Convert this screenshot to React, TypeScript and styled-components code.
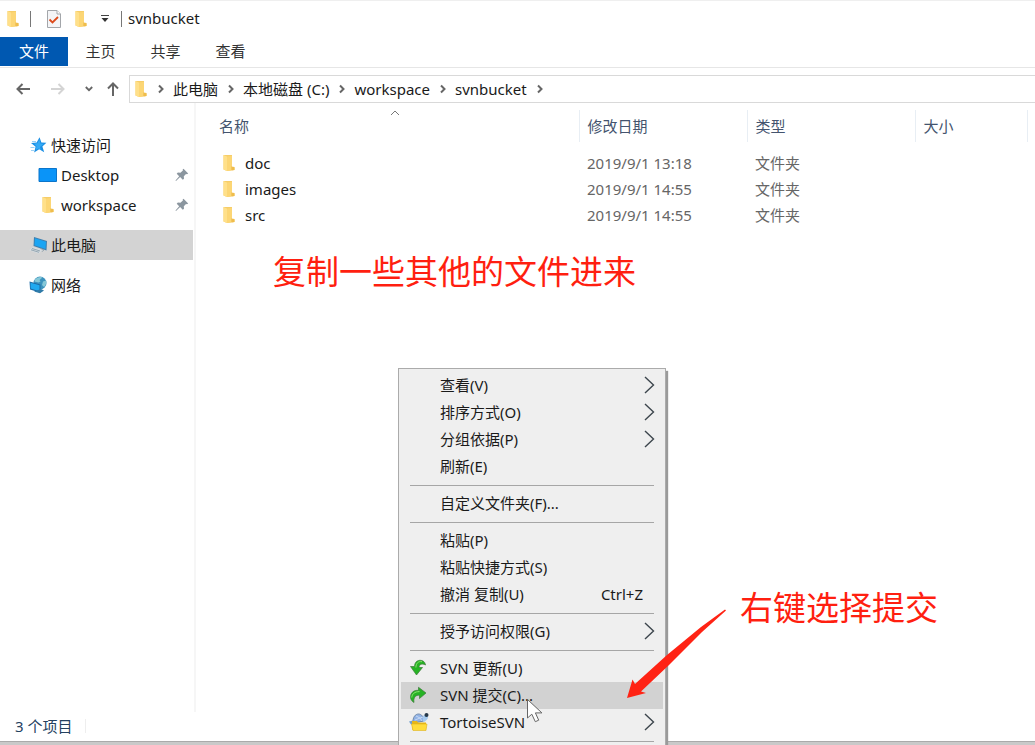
import React from "react";
import styled, { createGlobalStyle } from "styled-components";

const GlobalStyle = createGlobalStyle`
  * { box-sizing: border-box; }
  body {
    margin: 0;
    background: #fff;
    color: #1a1a1a;
    font: 15px/20px "Noto Sans", "Noto Sans CJK SC", sans-serif;
  }
  button, input { font: inherit; color: inherit; }
  ul, ol { list-style: none; margin: 0; padding: 0; }
`;

const Window = styled.div`
  position: relative;
  display: flex;
  flex-direction: column;
  height: 100vh;
  overflow: hidden;
  border-top: 1px solid #efefef;
`;

const TitleBar = styled.header`
  display: flex;
  align-items: center;
  height: 36px;
  padding: 0 6px 1px;
`;

const IconButton = styled.button<{ $w: number }>`
  display: flex;
  align-items: center;
  justify-content: center;
  flex: none;
  width: ${(p) => p.$w}px;
  height: 24px;
  padding: 0;
  border: 0;
  background: none;
`;

const Divider = styled.span<{ $before: number; $after: number }>`
  width: 1px;
  height: 16px;
  margin: 0 ${(p) => p.$after}px 0 ${(p) => p.$before}px;
  background: #777;
`;

const Title = styled.h1`
  margin: 0;
  padding-bottom: 2px;
  font-size: 15px;
  font-weight: 400;
  line-height: 20px;
`;

const Ribbon = styled.nav`
  display: flex;
  height: 31px;
  border-bottom: 1px solid #e6e6e6;
`;

const Tab = styled.button<{ $primary?: boolean }>`
  height: 29px;
  padding: 0 17px 1px;
  border: 0;
  background: ${(p) => (p.$primary ? "#0058b1" : "transparent")};
  color: ${(p) => (p.$primary ? "#fff" : "#333")};
  min-width: ${(p) => (p.$primary ? 68 : 65)}px;
`;

const NavBar = styled.div`
  display: flex;
  align-items: center;
  height: 35px;
  padding: 7px 0 0 9px;
`;

const Address = styled.ol`
  display: flex;
  flex: 1;
  align-items: center;
  height: 28px;
  padding: 0 0 1px 4px;
  border: 1px solid #d9d9d9;
  border-right: 0;
`;

const Crumb = styled.li`
  display: flex;
  align-items: center;
`;

const CrumbLink = styled.a`
  color: #1a1a1a;
  text-decoration: none;
`;

const CrumbArrow = styled.svg`
  width: 8px;
  height: 10px;
  margin: 0 8px 0 9px;
`;

const Body = styled.div`
  display: flex;
  flex: 1;
  min-height: 0;
`;

const Sidebar = styled.nav`
  flex: none;
  width: 196px;
  padding: 27px 1px 0 0;
  border-right: 2px solid #f6f6f6;
`;

const SideGroup = styled.ul`
  margin-bottom: 10px;
`;

const SideItem = styled.li<{ $nested?: boolean; $selected?: boolean }>`
  display: flex;
  align-items: center;
  gap: 4px;
  height: 30px;
  padding: 0 4px 1px ${(p) => (p.$nested ? 38 : 29)}px;
  background: ${(p) => (p.$selected ? "#d3d3d3" : "transparent")};
`;

const SideLink = styled.a`
  flex: 1;
  color: #1a1a1a;
  text-decoration: none;
`;

const SideIcon = styled.svg<{ $w: number }>`
  flex: none;
  width: ${(p) => p.$w}px;
  height: 18px;
`;

const FolderSlot = styled.span`
  display: flex;
  justify-content: center;
  width: 19px;
`;

const Files = styled.main`
  flex: 1;
  min-width: 0;
  padding: 7px 0 0 15px;
`;

const FileTable = styled.table`
  table-layout: fixed;
  width: 816px;
  border-collapse: collapse;
`;

const HeadCell = styled.th<{ $w: number }>`
  position: relative;
  width: ${(p) => p.$w}px;
  height: 32px;
  padding: 0 8px;
  border-right: 1px solid #e8eef4;
  color: #44546e;
  font-weight: 400;
  text-align: left;
`;

const SortMark = styled.svg`
  position: absolute;
  top: 0;
  left: 50%;
  width: 10px;
  height: 6px;
  margin-left: -5px;
`;

const Spacer = styled.tr`
  height: 8px;
`;

const Cell = styled.td`
  height: 26px;
  padding: 0 8px 1px;
  color: #666;
`;

const FileName = styled.span`
  display: flex;
  align-items: center;
  gap: 9px;
  padding-left: 3px;
  color: #1a1a1a;
`;

const StatusBar = styled.footer`
  display: flex;
  align-items: center;
  height: 33px;
  padding: 0 15px 2px;
  border-bottom: 3px solid #c9c9c9;
  box-shadow: inset 0 -1px 0 #aaa;
  color: #24415f;
`;

const StatusDivider = styled.span`
  width: 1px;
  height: 14px;
  margin-left: 13px;
  background: #eee;
`;

const Menu = styled.ul`
  position: absolute;
  top: 367px;
  bottom: 0;
  left: 398px;
  width: 268px;
  padding: 3px 2px;
  border: 1px solid #ababab;
  border-bottom: 0;
  background: #efefef;
  box-shadow: 2px 3px 1px #9a9a9a;
`;

const MenuButton = styled.button<{ $active?: boolean }>`
  display: flex;
  align-items: center;
  width: 100%;
  height: 27px;
  padding: 0 8px 1px;
  border: 0;
  background: ${(p) => (p.$active ? "#d2d2d2" : "transparent")};
  text-align: left;
`;

const MenuIcon = styled.span`
  display: flex;
  align-items: center;
  width: 31px;
  height: 20px;
`;

const MenuLabel = styled.span`
  flex: 1;
`;

const Shortcut = styled.kbd`
  padding-right: 12px;
  font: inherit;
`;

const Separator = styled.li`
  height: 1px;
  margin: 5px 9px 4px;
  background: #a6a6a6;
`;

const Note = styled.p<{ $x: number; $y: number }>`
  position: absolute;
  left: ${(p) => p.$x}px;
  top: ${(p) => p.$y}px;
  margin: 0;
  color: #ff1f10;
  font: 33px/40px "Noto Sans CJK SC", sans-serif;
  white-space: nowrap;
`;

const Overlay = styled.svg<{ $x: number; $y: number }>`
  position: absolute;
  left: ${(p) => p.$x}px;
  top: ${(p) => p.$y}px;
  pointer-events: none;
`;

const Folder = () => (
  <svg width="14" height="18" viewBox="0 0 14 18" aria-hidden="true">
    <path d="M1.5 1H10v12l2.500 .5V16l-7.500 1-3.500-1.500z" fill="#f6cd68" />
    <path d="M1.500 1 5 2.500V17l-3.500-1.500z" fill="#ffe08a" />
    <path d="M5 2.500 10 1.800V12l-1 1v3.500L5 17z" fill="#fcd675" />
    <path d="M9.500 12.500l3 .6V16l-3 .4z" fill="#efbd4d" />
  </svg>
);

const CheckedPage = () => (
  <svg width="16" height="18" viewBox="0 0 16 18" aria-hidden="true">
    <path d="M1.5 .5H11l3.500 3.500v13.500h-13z" fill="#f4f5f7" stroke="#a3a6aa" />
    <path d="M11 .5V4h3.500" fill="#fff" stroke="#a3a6aa" />
    <path d="m3.500 9.500 3 3 5.500-5.500" fill="none" stroke="#dc4b1c" strokeWidth="1.800" />
  </svg>
);

const Chevron = () => (
  <CrumbArrow viewBox="0 0 8 10" aria-hidden="true">
    <path d="m2 1.500 3.500 3.500L2 8.500" fill="none" stroke="#666" strokeWidth="2" />
  </CrumbArrow>
);

const Submenu = () => (
  <svg width="11" height="18" viewBox="0 0 11 18" aria-hidden="true">
    <path d="m1 1 8.500 8L1 17" fill="none" stroke="#3d464d" strokeWidth="1.400" />
  </svg>
);

const Pin = () => (
  <svg width="14" height="14" viewBox="0 0 14 14" aria-hidden="true">
    <path
      d="M8.500 .8 13.200 5.500 12 6.200l-1-.2-2.200 2.300 .2 2.400-1.200 1.100-2.700-2.700L1 13l-.5-.5 3.700-4.200-2.500-2.600 1.200-1.200 2.500 .2 2.500-2.200-.2-1z"
      fill="#8b969f"
    />
  </svg>
);

const Star = () => (
  <SideIcon $w={18} viewBox="0 0 18 18" aria-hidden="true">
    <path d="m10.500 1.200 1.900 5.300 5 .2-4 3.700 1.800 5.900-5-3.100-5.100 3.300 1.500-5.800L2 7l5.700-.5z" fill="#1b8fe4" />
    <path d="m10.300 3.200 1.200 4.200 3.500 .3-4 3.200 1 3-2.500-1.500-3 1.500 1-3.500L5 7.600l3.500-.3z" fill="#34aaf5" />
    <path d="M3 5.500h4M1.500 11.500h4M2 14.500h3" stroke="#9ad2f6" />
  </SideIcon>
);

const Screen = () => (
  <SideIcon $w={19} viewBox="0 0 19 18" aria-hidden="true">
    <path d="M1 2.500h17.500v13H1z" fill="#0a94f8" stroke="#0b75ca" />
  </SideIcon>
);

const Computer = () => (
  <SideIcon $w={18} viewBox="0 0 18 18" aria-hidden="true">
    <path d="m5 1 13 4-.5 9.500L4.500 10z" fill="#3f7fae" />
    <path d="m6 2.300 11 3.500-.5 7.200-11-3.700z" fill="#1ba5f3" />
    <path d="m4 11 9 3-3 3.500-10-3.200z" fill="#d6dde2" />
    <path d="m3 12.500 8 2.500M2 13.800l8 2.500M11.500 12.500l3.500 1.300-2 2" fill="none" stroke="#8498a5" strokeWidth=".8" />
  </SideIcon>
);

const Network = () => (
  <SideIcon $w={18} viewBox="0 0 18 18" aria-hidden="true">
    <circle cx="11" cy="7" r="6.500" fill="#3c92bd" />
    <path d="M6 3.500C8 1 12 .3 13.500 1.500L10.500 4l1 1.500-2 1-4-1zM14 5.500l3-1c.8 2-.2 5-2 6.500L13 9z" fill="#86c8d8" />
    <path d="m.5 5.500 11 3v8.300L1 13.500z" fill="#1d6ca7" />
    <path d="m1.500 6.700 9 2.600v5.900l-8.800-2.600z" fill="#20a9f0" />
    <path d="m5 15.500 6 1.800 4-2.800-3-1.500z" fill="#317ba8" />
  </SideIcon>
);

const UpdateIcon = () => (
  <svg width="18" height="18" viewBox="0 0 18 18" aria-hidden="true">
    <path d="M16.500 6C16 2 12.500 .8 9.500 1.500 6.800 2.200 5.500 4.500 5.500 7.500H1.500L7.500 16l6-7.500H10C10 5.500 13 4 16.500 6z" fill="#26b324" stroke="#3f7a3c" strokeWidth=".7" />
    <path d="M13 2.700C9 2 7 4.500 6.900 8.500" fill="none" stroke="#8be36f" />
  </svg>
);

const CommitIcon = () => (
  <svg width="18" height="18" viewBox="0 0 18 18" aria-hidden="true">
    <path d="M5 16.500C1.500 14.500 .8 11 2.200 8 3.500 5.200 6 4.200 9.500 4.300V1.300L17 7l-6.500 5.500V9.200C6.500 9 4.200 11.500 5 16.500z" fill="#26b324" stroke="#3f7a3c" strokeWidth=".7" />
    <path d="M2.800 11.500C3 8 5.500 5.600 10.500 5.600" fill="none" stroke="#8be36f" />
  </svg>
);

const TortoiseIcon = () => (
  <svg width="20" height="20" viewBox="0 0 20 20" aria-hidden="true">
    <path d="M4 11C3.500 5 6.500 2 9.500 2S15 5 15 9z" fill="#91b3e6" stroke="#7189a8" />
    <path d="m7 4 4 2 3-1M6 8l5-2 2 3" fill="none" stroke="#c6d8f3" />
    <path d="M14 5.500c0-4 5-4 5 0 0 2-2 3-5 5z" fill="#a5caef" />
    <circle cx="17.500" cy="3" r="2" fill="#263849" />
    <path d="m0 9.500 4-1 1 3-3 1z" fill="#729fce" />
    <path d="M3 9h5l1 1.500h8V18H3.500z" fill="#e7b719" />
    <path d="M2.500 12H18l-1 6.500H4z" fill="#ffdc3b" stroke="#dfb41c" strokeWidth=".6" />
  </svg>
);

const crumbs = ["此电脑", "本地磁盘 (C:)", "workspace", "svnbucket"];

const files = [
  { name: "doc", date: "2019/9/1 13:18" },
  { name: "images", date: "2019/9/1 14:55" },
  { name: "src", date: "2019/9/1 14:55" },
];

type Entry = {
  label: string;
  sub?: boolean;
  keys?: string;
  icon?: React.ReactNode;
  active?: boolean;
};

const menuGroups: Entry[][] = [
  [
    { label: "查看(V)", sub: true },
    { label: "排序方式(O)", sub: true },
    { label: "分组依据(P)", sub: true },
    { label: "刷新(E)" },
  ],
  [{ label: "自定义文件夹(F)..." }],
  [{ label: "粘贴(P)" }, { label: "粘贴快捷方式(S)" }, { label: "撤消 复制(U)", keys: "Ctrl+Z" }],
  [{ label: "授予访问权限(G)", sub: true }],
  [
    { label: "SVN 更新(U)", icon: <UpdateIcon /> },
    { label: "SVN 提交(C)...", icon: <CommitIcon />, active: true },
    { label: "TortoiseSVN", icon: <TortoiseIcon />, sub: true },
  ],
];

export default function App() {
  return (
    <Window>
      <GlobalStyle />
      <TitleBar>
        <IconButton $w={14} aria-label="窗口"><Folder /></IconButton>
        <Divider $before={10} $after={15} />
        <IconButton $w={16} aria-label="属性"><CheckedPage /></IconButton>
        <IconButton $w={38} aria-label="新建文件夹"><Folder /></IconButton>
        <IconButton $w={10} aria-label="自定义快速访问工具栏">
          <svg width="8" height="8" viewBox="0 0 8 8" aria-hidden="true">
            <path d="M0 .5h8" stroke="#444" />
            <path d="M.5 3h7L4 7z" fill="#333" />
          </svg>
        </IconButton>
        <Divider $before={11} $after={6} />
        <Title>svnbucket</Title>
      </TitleBar>

      <Ribbon>
        <Tab $primary>文件</Tab>
        <Tab>主页</Tab>
        <Tab>共享</Tab>
        <Tab>查看</Tab>
      </Ribbon>

      <NavBar>
        <IconButton $w={27} aria-label="后退">
          <svg width="14" height="12" viewBox="0 0 14 12"><path d="M14 6H2M6.500 1 1.500 6l5 5" fill="none" stroke="#666" strokeWidth="2" /></svg>
        </IconButton>
        <IconButton $w={44} aria-label="前进">
          <svg width="14" height="12" viewBox="0 0 14 12"><path d="M0 6h12M7.500 1l5 5-5 5" fill="none" stroke="#d4d4d4" strokeWidth="2" /></svg>
        </IconButton>
        <IconButton $w={17} aria-label="最近浏览的位置">
          <svg width="8" height="6" viewBox="0 0 8 6"><path d="m.8 1 3.200 3.200L7.200 1" fill="none" stroke="#666" strokeWidth="1.800" /></svg>
        </IconButton>
        <IconButton $w={32} aria-label="上移">
          <svg width="12" height="14" viewBox="0 0 12 14"><path d="M6 14V2M1 6.500l5-5 5 5" fill="none" stroke="#666" strokeWidth="2" /></svg>
        </IconButton>
        <Address>
          <Crumb><Folder /><Chevron /></Crumb>
          {crumbs.map((c) => (
            <Crumb key={c}><CrumbLink href="#">{c}</CrumbLink><Chevron /></Crumb>
          ))}
        </Address>
      </NavBar>

      <Body>
        <Sidebar>
          <SideGroup>
            <SideItem><Star /><SideLink href="#">快速访问</SideLink></SideItem>
            <SideItem $nested><Screen /><SideLink href="#">Desktop</SideLink><Pin /></SideItem>
            <SideItem $nested>
              <FolderSlot><Folder /></FolderSlot><SideLink href="#">workspace</SideLink><Pin />
            </SideItem>
          </SideGroup>
          <SideGroup>
            <SideItem $selected><Computer /><SideLink href="#">此电脑</SideLink></SideItem>
          </SideGroup>
          <SideGroup>
            <SideItem><Network /><SideLink href="#">网络</SideLink></SideItem>
          </SideGroup>
        </Sidebar>

        <Files>
          <FileTable>
            <thead>
              <tr>
                <HeadCell $w={368}>
                  名称
                  <SortMark viewBox="0 0 10 6" aria-hidden="true"><path d="m1 5 4-4 4 4" fill="none" stroke="#777" /></SortMark>
                </HeadCell>
                <HeadCell $w={168}>修改日期</HeadCell>
                <HeadCell $w={168}>类型</HeadCell>
                <HeadCell $w={112}>大小</HeadCell>
              </tr>
            </thead>
            <tbody>
              <Spacer />
              {files.map((f) => (
                <tr key={f.name}>
                  <Cell><FileName><Folder />{f.name}</FileName></Cell>
                  <Cell>{f.date}</Cell>
                  <Cell>文件夹</Cell>
                  <Cell />
                </tr>
              ))}
            </tbody>
          </FileTable>
        </Files>
      </Body>

      <StatusBar>3 个项目<StatusDivider /></StatusBar>

      <Menu>
        {menuGroups.map((group, i) => (
          <React.Fragment key={i}>
            {group.map((m) => (
              <li key={m.label}>
                <MenuButton $active={m.active}>
                  <MenuIcon>{m.icon}</MenuIcon>
                  <MenuLabel>{m.label}</MenuLabel>
                  {m.keys && <Shortcut>{m.keys}</Shortcut>}
                  {m.sub && <Submenu />}
                </MenuButton>
              </li>
            ))}
            <Separator />
          </React.Fragment>
        ))}
      </Menu>

      <Note $x={273} $y={249}>复制一些其他的文件进来</Note>
      <Note $x={740} $y={585}>右键选择提交</Note>

      <Overlay $x={626} $y={607} width="102" height="92" viewBox="0 0 102 92" aria-hidden="true">
        <path d="M1 90 6.500 71.500 9 76 41 47 75 19 99 1.500l1 1L76 24 43 57 15 83.500l5 1.500z" fill="#ff2314" />
      </Overlay>
      <Overlay $x={526} $y={697} width="18" height="26" viewBox="0 0 18 26" aria-hidden="true">
        <path d="M1.500 1.500v18.500l4.300-3.800 3.500 7.500 3.400-1.500-3.300-7.300h6.500z" fill="#fff" stroke="#666" />
      </Overlay>
    </Window>
  );
}
